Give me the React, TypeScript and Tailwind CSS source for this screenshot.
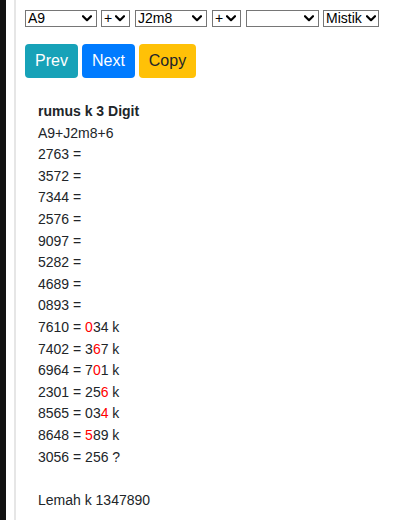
import React from "react";

function Chevron() {
  return (
    <svg width="10" height="7" viewBox="0 0 10 7" className="shrink-0">
      <path d="M1 1.2 L5 5.2 L9 1.2" fill="none" stroke="#000" strokeWidth="2.2" strokeLinecap="round" strokeLinejoin="round" />
    </svg>
  );
}

function Sel({ label, w, ml, pr }: { label: string; w: string; ml: string; pr?: string }) {
  return (
    <div
      className={`${w} ${ml} h-[17px] border border-[#767676] bg-white flex items-center justify-between pl-[2px] ${pr ?? "pr-[4px]"} text-[14px] leading-[15px] text-black`}
    >
      <span className="whitespace-nowrap">{label}</span>
      <Chevron />
    </div>
  );
}

const R = ({ c }: { c: string }) => <span className="text-[#ff0000]">{c}</span>;

export default function App() {
  const lines: React.ReactNode[] = [
    "A9+J2m8+6",
    "2763 =",
    "3572 =",
    "7344 =",
    "2576 =",
    "9097 =",
    "5282 =",
    "4689 =",
    "0893 =",
    <>7610 = <R c="0" />34 k</>,
    <>7402 = 3<R c="6" />7 k</>,
    <>6964 = 7<R c="0" />1 k</>,
    <>2301 = 25<R c="6" /> k</>,
    <>8565 = 03<R c="4" /> k</>,
    <>8648 = <R c="5" />89 k</>,
    "3056 = 256 ?",
  ];
  return (
    <div
      className="flex w-[403px] h-[520px] bg-white overflow-hidden"
      style={{ fontFamily: '"Liberation Sans", Arial, sans-serif' }}
    >
      <div className="w-[6px] bg-[#111111] shrink-0" />
      <div className="w-[8px] bg-white shrink-0" />
      <div className="w-[2px] bg-[#e6e6e6] shrink-0" />
      <div className="flex-1 pl-[9px] pt-[10px]">
        <div className="flex items-center">
          <Sel label="A9" w="w-[72px]" ml="ml-0" />
          <Sel label="+" w="w-[29px]" ml="ml-[4px]" />
          <Sel label="J2m8" w="w-[72px]" ml="ml-[5px]" />
          <Sel label="+" w="w-[29px]" ml="ml-[5px]" />
          <Sel label="" w="w-[73px]" ml="ml-[5px]" />
          <Sel label="Mistik" w="w-[56px]" ml="ml-[4px]" pr="pr-[2px]" />
        </div>
        <div className="flex gap-[4px] mt-[17px]">
          <div className="w-[53px] h-[34px] rounded-[4px] bg-[#17a2b8] text-white text-[16px] flex items-center justify-center">Prev</div>
          <div className="w-[53px] h-[34px] rounded-[4px] bg-[#007bff] text-white text-[16px] flex items-center justify-center">Next</div>
          <div className="w-[57px] h-[34px] rounded-[4px] bg-[#ffc107] text-[#212529] text-[16px] flex items-center justify-center">Copy</div>
        </div>
        <div className="mt-[23px] pl-[13px] text-[14px] leading-[21.6px] text-[#212529]">
          <div className="font-bold">rumus k 3 Digit</div>
          {lines.map((l, i) => (
            <div key={i}>{l}</div>
          ))}
          <div className="h-[21.6px]" />
          <div>Lemah k 1347890</div>
        </div>
      </div>
    </div>
  );
}
